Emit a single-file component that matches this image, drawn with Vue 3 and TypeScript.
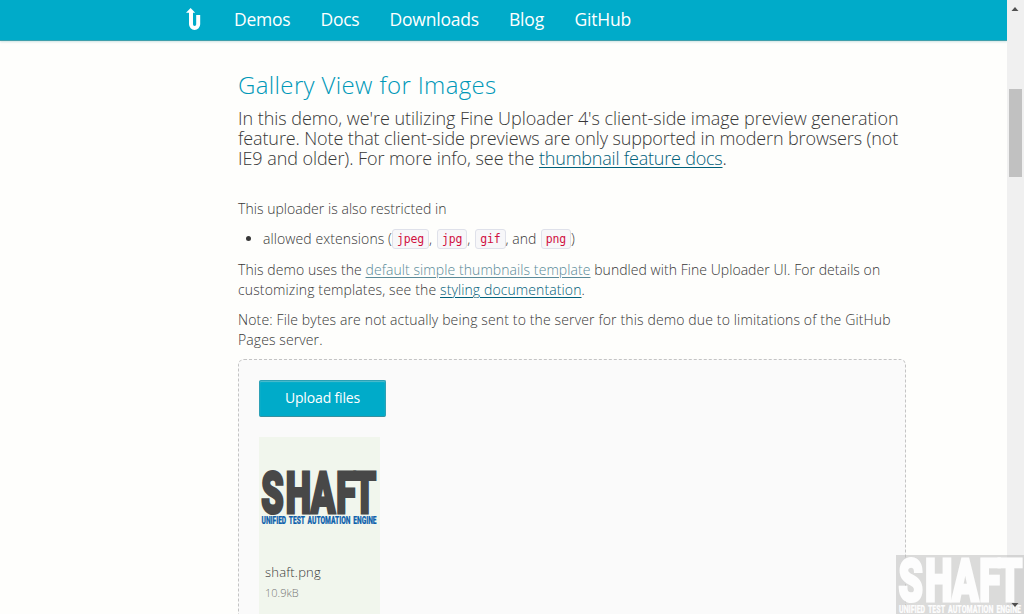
<script setup lang="ts">
interface NavItem { label: string; cls: string }

const nav: NavItem[] = [
  { label: 'Demos', cls: 'demos' },
  { label: 'Docs', cls: 'docs' },
  { label: 'Downloads', cls: 'downloads' },
  { label: 'Blog', cls: 'blog' },
  { label: 'GitHub', cls: 'github' },
]
</script>

<template>
  <div class="window">
    <div class="page">
      <header class="bar">
        <svg class="logo" width="16" height="24" viewBox="0 0 16 24">
          <path d="M5 4.5V17.3a3.6 3.6 0 0 0 7.2 0V8" fill="none" stroke="#fff" stroke-width="4" />
          <path d="M0 5.8 4.6 1l4.6 4.8z" fill="#fff" />
        </svg>
        <nav class="nav">
          <a v-for="item in nav" :key="item.label" :class="item.cls">{{ item.label }}</a>
        </nav>
      </header>

      <main class="content">
        <h2 class="title">Gallery View for Images</h2>
        <p class="intro">
          <span class="i1">In this demo, we're utilizing Fine Uploader 4's client-side image preview generation</span><br>
          <span class="i2">feature. Note that client-side previews are only supported in modern browsers (not</span><br>
          <span class="i3">IE9 and older). For more info, see the </span><a class="i4">thumbnail feature docs</a>.
        </p>
        <p class="restrict">This uploader is also restricted in</p>
        <ul class="list">
          <li><span class="ext">allowed extensions (</span><code>jpeg</code><span class="c1">,</span><code>jpg</code><span class="c2">,</span><code>gif</code><span class="c3">, and</span><code>png</code><span>)</span></li>
        </ul>
        <p class="text">
          <span class="t1">This demo uses the </span><a class="t2 visited">default simple thumbnails template</a><span class="t3"> bundled with Fine Uploader UI. For details on</span><br>
          <span class="t4">customizing templates, see the </span><a class="t5">styling documentation</a>.
        </p>
        <p class="text">
          <span class="t6">Note: File bytes are not actually being sent to the server for this demo due to limitations of the GitHub</span><br>
          <span class="t7">Pages server.</span>
        </p>

        <section class="uploader">
          <button class="upload">Upload files</button>
          <div class="card">
            <svg class="thumb" width="121" height="121" viewBox="0 0 121 121">
              <text class="word" transform="scale(.63 1)" x="3.5 42.5 82 122.5 150" y="76.3" font-size="57">SHAFT</text>
              <text class="tag" x="2.5" y="86.8" font-size="11.2" textLength="115" lengthAdjust="spacingAndGlyphs">UNIFIED TEST AUTOMATION ENGINE</text>
            </svg>
            <div class="name">shaft.png</div>
            <div class="size">10.9kB</div>
          </div>
        </section>
      </main>
    </div>

    <aside class="scroll">
      <svg width="17" height="17" viewBox="0 0 17 17"><path d="M4.5 11 8 7l3.5 4z" fill="#505050" /></svg>
      <div class="thumbbar"></div>
    </aside>

    <svg class="watermark" width="128" height="59" viewBox="0 0 128 59">
      <path d="M0 0H128V59H0z" fill="#bdbdbd" fill-opacity=".55" />
      <text class="wm-word" transform="scale(.65 1)" x="4 44.5 86 128 156.5" y="46.3" font-size="60">SHAFT</text>
      <text class="wm-tag" x="3" y="57.7" font-size="11.2" textLength="122" lengthAdjust="spacingAndGlyphs">UNIFIED TEST AUTOMATION ENGINE</text>
      <path d="M115.5 48h7l-3.5 4z" fill="#505050" />
    </svg>
  </div>
</template>

<style>
body { margin: 0; overflow: hidden; }
</style>

<style scoped>
.window {
  position: relative;
  display: flex;
  width: 1024px;
  height: 614px;
  overflow: hidden;
  background: #fefefc;
  color: #383838;
  font: 300 14px/20px "Open Sans", "Noto Sans", sans-serif;
}
.page { width: 1007px; height: 614px; overflow: hidden; }
.bar {
  display: flex;
  box-sizing: border-box;
  height: 41px;
  padding-left: 186px;
  background: #00abc9;
  border-bottom: 1px solid #3f9fab;
  box-shadow: 0 1px 2px #cfe3e3;
}
.logo { margin-top: 7px; }
.nav {
  display: flex;
  margin-left: 32px;
  color: #fff;
  font-size: 17.5px;
  font-weight: 400;
  line-height: 39px;
}
.nav a { display: block; color: #fff; white-space: nowrap; }
.demos { width: 86.5px; letter-spacing: -.25px; }
.docs { width: 69px; letter-spacing: -.25px; }
.downloads { width: 119.5px; letter-spacing: -.2px; }
.blog { width: 65.5px; letter-spacing: -.2px; }
.github { letter-spacing: -.2px; }

.content { width: 668px; margin-left: 238px; padding-top: 29px; white-space: nowrap; }
.title {
  margin: 0;
  color: #0098b8;
  font-size: 24px;
  font-weight: 300;
  line-height: 30px;
  letter-spacing: .36px;
}
.intro { margin: 8px 0 0; font-size: 18px; line-height: 20px; }
.i1 { letter-spacing: -.035px; }
.i2 { letter-spacing: -.12px; }
.i3 { letter-spacing: -.067px; }
.i4 { letter-spacing: -.21px; }
a { color: #00607a; }
.intro a, .text a { text-decoration: underline; text-decoration-thickness: 1px; text-underline-offset: 2px; }
.text .visited { color: #5a8a98; }
.restrict { margin: 31px 0 0; letter-spacing: .04px; }
.list { margin: 10px 0 0; padding: 0 0 0 25px; }
.list li { height: 21px; line-height: 20px; }
.ext { letter-spacing: .092px; }
code {
  display: inline-block;
  box-sizing: border-box;
  height: 20px;
  padding: 0 4px;
  border: 1px solid #dfe1ea;
  border-radius: 3px;
  background: #f7f7f9;
  color: #d0103f;
  font: 400 11.5px/18px "DejaVu Sans Mono", "Liberation Mono", monospace;
  letter-spacing: -.17px;
  vertical-align: top;
}
.c1 { margin-right: 5px; }
.c2 { margin-right: 5px; }
.c3 { margin-right: 4.5px; }
.text { margin: 10px 0 0; }
.list + .text { margin-top: 10px; }
.t1 { letter-spacing: .075px; }
.t2 { letter-spacing: .077px; }
.t3 { letter-spacing: .045px; }
.t4 { letter-spacing: .14px; }
.t5 { letter-spacing: .103px; }
.t6 { letter-spacing: .138px; }
.t7 { letter-spacing: .1px; }

.uploader {
  box-sizing: border-box;
  height: 320px;
  margin-top: 9px;
  padding: 20px;
  border: 1px dashed #c4c4c4;
  border-radius: 6px;
  background: #fafafa;
}
.upload {
  display: block;
  box-sizing: border-box;
  width: 127px;
  height: 37px;
  padding: 0 0 1px;
  border: 1px solid #2da1b6;
  border-bottom-color: #37909f;
  border-radius: 2px;
  box-shadow: inset 0 1px 1px #4fbccd;
  background: #00abc9;
  color: #fff;
  font: 400 14px/34px "Open Sans", "Noto Sans", sans-serif;
  letter-spacing: -.15px;
}
.card { width: 121px; height: 200px; margin-top: 20px; background: #f1f6ed; }
.thumb { display: block; }
.word, .tag, .wm-word, .wm-tag { font-family: Roboto, "Liberation Sans", sans-serif; font-weight: 900; }
.word { fill: #484848; stroke: #484848; stroke-width: 3; }
.tag { fill: #0f62ac; stroke: #0f62ac; stroke-width: .2; word-spacing: 2px; }
.name { padding: 4px 0 0 6px; font-size: 13px; letter-spacing: .2px; }
.size { padding-left: 6px; color: #777; font-size: 11px; line-height: 22px; }

.scroll { width: 17px; background: #f0f0f0; }
.scroll svg { display: block; }
.thumbbar { width: 13px; height: 88px; margin: 72px 0 0 2px; background: #c1c1c1; }
.watermark { position: absolute; right: 0; bottom: 0; }
.wm-word { fill: #fdfdfd; stroke: #fdfdfd; stroke-width: 3; }
.wm-tag { fill: #fdfdfd; stroke: #fdfdfd; stroke-width: .2; word-spacing: 2px; }
</style>
